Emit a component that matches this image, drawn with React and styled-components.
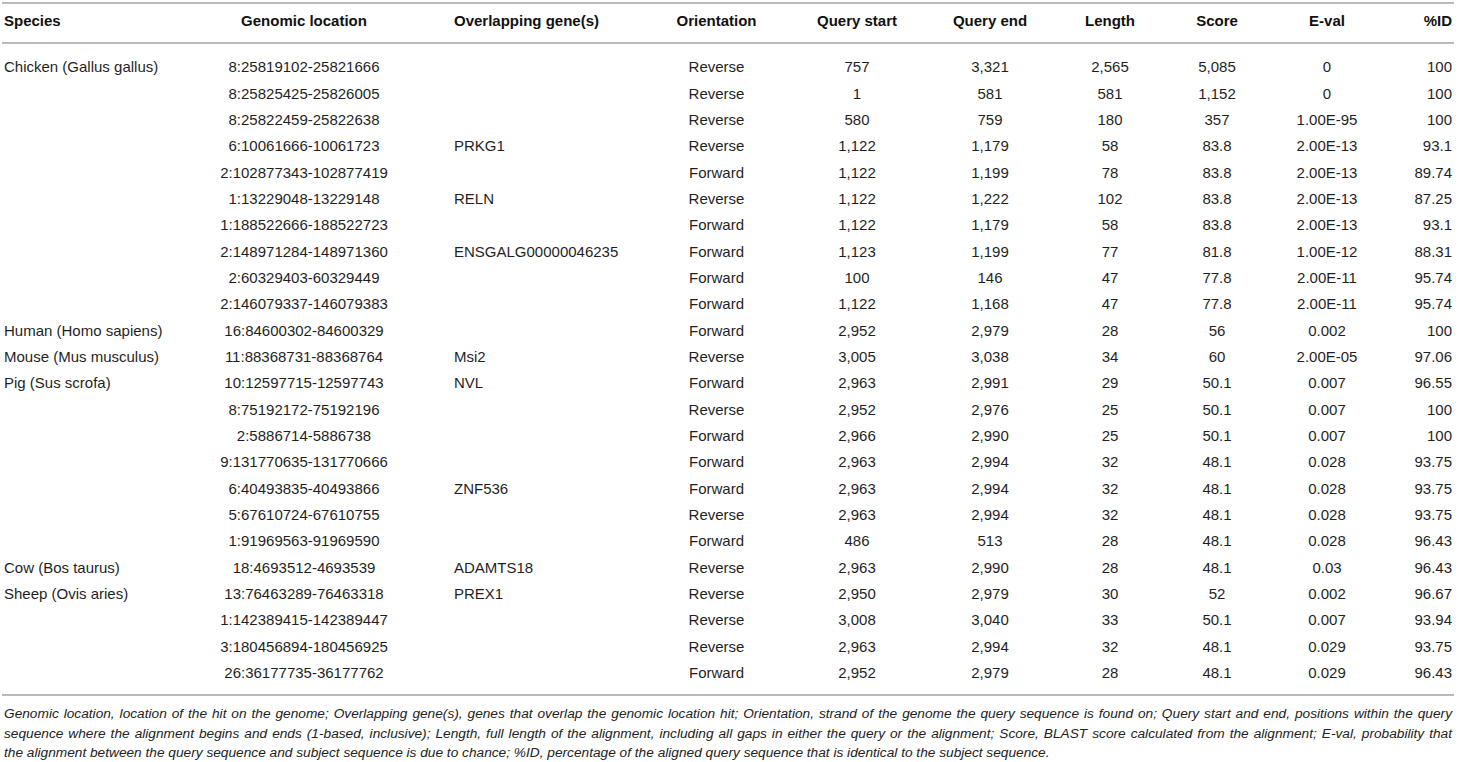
import React from "react";
import styled, { createGlobalStyle } from "styled-components";

const Global = createGlobalStyle`
  html, body { margin: 0; padding: 0; background: #ffffff; }
  body { font-family: "Liberation Sans", Arial, Helvetica, sans-serif; color: #1c1c1c; }
`;

const COLS = "154px 296px 194px 141px 140px 126px 114px 100px 120px 67px";
const ALIGN = ["left", "center", "left", "center", "center", "center", "center", "center", "center", "right"];

const Page = styled.div`
  padding: 2px 4px 0 2px;
  width: 1452px;
`;

const Table = styled.div`
  border-top: 2px solid #b9b9b9;
  border-bottom: 2px solid #b9b9b9;
`;

const HeadRow = styled.div`
  display: grid;
  grid-template-columns: ${COLS};
  height: 38px;
  align-items: center;
  border-bottom: 2px solid #b9b9b9;
  box-sizing: content-box;
`;

const Body = styled.div`
  padding: 10px 0 8px;
`;

const Row = styled.div`
  display: grid;
  grid-template-columns: ${COLS};
  height: 26.35px;
  align-items: center;
`;

const HeadCell = styled.div`
  font-weight: 700;
  font-size: 15px;
  line-height: 18px;
  padding: 0 2px 4px;
  text-align: ${(p) => p.$align};
  color: #111;
`;

const Cell = styled.div`
  font-size: 15px;
  line-height: 18px;
  padding: 0 2px;
  text-align: ${(p) => p.$align};
  white-space: nowrap;
  color: #1f1f1f;
`;

const Caption = styled.div`
  padding: 8px 2px 0;
  font-style: italic;
  font-size: 13.7px;
  line-height: 19.5px;
  color: #222;
`;

const CapLine = styled.div`
  text-align: ${(p) => (p.$justify ? "justify" : "left")};
  text-align-last: ${(p) => (p.$justify ? "justify" : "left")};
  white-space: nowrap;
`;

const headers = [
  "Species",
  "Genomic location",
  "Overlapping gene(s)",
  "Orientation",
  "Query start",
  "Query end",
  "Length",
  "Score",
  "E-val",
  "%ID",
];

const rows = [
  ["Chicken (Gallus gallus)", "8:25819102-25821666", "", "Reverse", "757", "3,321", "2,565", "5,085", "0", "100"],
  ["", "8:25825425-25826005", "", "Reverse", "1", "581", "581", "1,152", "0", "100"],
  ["", "8:25822459-25822638", "", "Reverse", "580", "759", "180", "357", "1.00E-95", "100"],
  ["", "6:10061666-10061723", "PRKG1", "Reverse", "1,122", "1,179", "58", "83.8", "2.00E-13", "93.1"],
  ["", "2:102877343-102877419", "", "Forward", "1,122", "1,199", "78", "83.8", "2.00E-13", "89.74"],
  ["", "1:13229048-13229148", "RELN", "Reverse", "1,122", "1,222", "102", "83.8", "2.00E-13", "87.25"],
  ["", "1:188522666-188522723", "", "Forward", "1,122", "1,179", "58", "83.8", "2.00E-13", "93.1"],
  ["", "2:148971284-148971360", "ENSGALG00000046235", "Forward", "1,123", "1,199", "77", "81.8", "1.00E-12", "88.31"],
  ["", "2:60329403-60329449", "", "Forward", "100", "146", "47", "77.8", "2.00E-11", "95.74"],
  ["", "2:146079337-146079383", "", "Forward", "1,122", "1,168", "47", "77.8", "2.00E-11", "95.74"],
  ["Human (Homo sapiens)", "16:84600302-84600329", "", "Forward", "2,952", "2,979", "28", "56", "0.002", "100"],
  ["Mouse (Mus musculus)", "11:88368731-88368764", "Msi2", "Reverse", "3,005", "3,038", "34", "60", "2.00E-05", "97.06"],
  ["Pig (Sus scrofa)", "10:12597715-12597743", "NVL", "Forward", "2,963", "2,991", "29", "50.1", "0.007", "96.55"],
  ["", "8:75192172-75192196", "", "Reverse", "2,952", "2,976", "25", "50.1", "0.007", "100"],
  ["", "2:5886714-5886738", "", "Forward", "2,966", "2,990", "25", "50.1", "0.007", "100"],
  ["", "9:131770635-131770666", "", "Forward", "2,963", "2,994", "32", "48.1", "0.028", "93.75"],
  ["", "6:40493835-40493866", "ZNF536", "Forward", "2,963", "2,994", "32", "48.1", "0.028", "93.75"],
  ["", "5:67610724-67610755", "", "Reverse", "2,963", "2,994", "32", "48.1", "0.028", "93.75"],
  ["", "1:91969563-91969590", "", "Forward", "486", "513", "28", "48.1", "0.028", "96.43"],
  ["Cow (Bos taurus)", "18:4693512-4693539", "ADAMTS18", "Reverse", "2,963", "2,990", "28", "48.1", "0.03", "96.43"],
  ["Sheep (Ovis aries)", "13:76463289-76463318", "PREX1", "Reverse", "2,950", "2,979", "30", "52", "0.002", "96.67"],
  ["", "1:142389415-142389447", "", "Reverse", "3,008", "3,040", "33", "50.1", "0.007", "93.94"],
  ["", "3:180456894-180456925", "", "Reverse", "2,963", "2,994", "32", "48.1", "0.029", "93.75"],
  ["", "26:36177735-36177762", "", "Forward", "2,952", "2,979", "28", "48.1", "0.029", "96.43"],
];

const captionLines = [
  "Genomic location, location of the hit on the genome; Overlapping gene(s), genes that overlap the genomic location hit; Orientation, strand of the genome the query sequence is found on; Query start and end, positions within the query",
  "sequence where the alignment begins and ends (1-based, inclusive); Length, full length of the alignment, including all gaps in either the query or the alignment; Score, BLAST score calculated from the alignment; E-val, probability that",
  "the alignment between the query sequence and subject sequence is due to chance; %ID, percentage of the aligned query sequence that is identical to the subject sequence.",
];

export default function App() {
  return (
    <>
      <Global />
      <Page>
        <Table>
          <HeadRow>
            {headers.map((h, i) => (
              <HeadCell key={h} $align={ALIGN[i]}>
                {h}
              </HeadCell>
            ))}
          </HeadRow>
          <Body>
            {rows.map((r, ri) => (
              <Row key={ri}>
                {r.map((c, ci) => (
                  <Cell key={ci} $align={ALIGN[ci]}>
                    {c}
                  </Cell>
                ))}
              </Row>
            ))}
          </Body>
        </Table>
        <Caption>
          {captionLines.map((l, i) => (
            <CapLine key={i} $justify={i < 2}>
              {l}
            </CapLine>
          ))}
        </Caption>
      </Page>
    </>
  );
}
